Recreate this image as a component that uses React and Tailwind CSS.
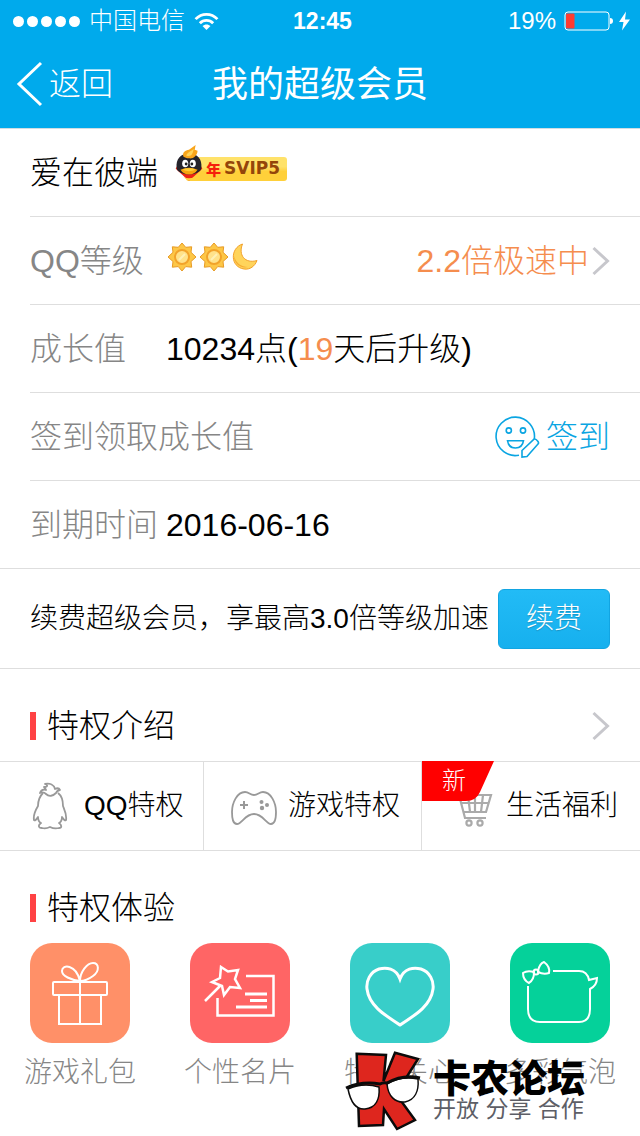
import classNames from 'clsx'

const SignalDots = () => (
  <div className="flex gap-[3px]">
    {[1, 2, 3, 4, 5].map((i) => (
      <span key={i} className="h-[11px] w-[11px] rounded-full bg-white" />
    ))}
  </div>
)

const Wifi = () => (
  <svg width="25" height="19" viewBox="0 0 26 20" fill="none" stroke="#fff" strokeWidth="3">
    <path d="M1.5 7.5C8 .8 18 .8 24.500 7.500" />
    <path d="M6 11.800c4-4 10-4 14 0" />
    <path d="M13 19l-4.200-4.300c2.400-2.200 6-2.200 8.400 0z" fill="#fff" stroke="none" />
  </svg>
)

const Battery = () => (
  <svg width="68" height="20" viewBox="0 0 68 20">
    <rect x="1" y="1" width="44" height="18" rx="3" fill="none" stroke="#fff" />
    <rect x="2" y="2.500" width="8.500" height="15" rx="1" fill="#ff3b30" />
    <path d="M46 7q3 0 3 3t-3 3z" fill="#fff" />
    <path d="M62 .5l-7 10.500h4.500l-1.500 8.500 8-11h-5z" fill="#fff" />
  </svg>
)

const Chevron = () => (
  <svg width="18" height="30" viewBox="0 0 18 30" fill="none" stroke="#c7c7cc" strokeWidth="3">
    <path d="M1.500 2l14 13-14 13" />
  </svg>
)

const SvipBadge = () => (
  <span className="relative mb-4 ml-2 flex h-10 w-[113px] items-end pb-1">
    <span className="ml-3 flex h-6 flex-1 items-center rounded-[3px] bg-linear-to-b from-[#ffe26a] from-40% to-[#ffd03a] to-60% pl-5">
      <span className="font-['Noto_Sans_CJK_SC',sans-serif] text-[15px] leading-none font-black text-[#f5200c]">年</span>
      <span className="pl-[3px] font-['DejaVu_Sans',sans-serif] text-[17px] leading-none font-bold text-[#94450a]">SVIP5</span>
    </span>
    <svg className="absolute top-0 left-0" width="30" height="38" viewBox="0 0 30 40">
      <path d="M1 25l14 13 14-13-3-6H4z" fill="#ee2314" />
      <path d="M2 24C1 15 6 9 15 9s14 6 13 15c0 4-6 7-13 7S2 28 2 24z" fill="#25232b" />
      <path d="M9 12c-1-5 2-6 6-7l7-5-1 5 3 1c0 5-5 9-9 8-3 0-4-1-6-2z" fill="#f9a51b" />
      <path d="M12 11c2-4 5-4 8-7-1 6-3 9-8 7z" fill="#ffd45a" />
      <ellipse cx="11" cy="19.500" rx="3.200" ry="4" fill="#fff" />
      <ellipse cx="19" cy="19.500" rx="3.200" ry="4" fill="#fff" />
      <circle cx="12" cy="20" r="1.500" fill="#222" />
      <circle cx="18" cy="20" r="1.500" fill="#222" />
      <path d="M6 26q9-4 18 0-3 5-9 5T6 26z" fill="#f7a30c" />
      <path d="M8 26q7-3 14 0-7 3-14 0z" fill="#ffcb35" />
      <path d="M9 34l6 4 6-4q-6 2-12 0z" fill="#ffd23e" />
    </svg>
  </span>
)

const Sun = () => (
  <svg width="32" height="30" viewBox="0 0 32 30">
    <path
      d="M16 1l3.700 4.300 6-.5-.7 5.500L30 15l-5 4.500.7 5.700-6-.6L16 29l-3.700-4.400-6 .6.700-5.700L2 15l5-4.700-.7-5.500 6 .5z"
      fill="#fdc747"
      stroke="#e89b26"
    />
    <circle cx="16" cy="15" r="7" fill="#ffe28a" stroke="#f2a32b" strokeWidth="2" />
    <path d="M13 18l6-6" stroke="#fff0b5" strokeWidth="2" />
  </svg>
)

const Moon = () => (
  <svg width="32" height="30" viewBox="0 0 32 30">
    <path d="M12.500 2C0 6 0 25 14 27c6 1 11-3 13-8.500C15 22 8 13 12.500 2z" fill="#ffd45b" stroke="#f2a12a" />
    <path d="M4 14c0 8 7 13 14 11-7 0-12-4-14-11z" fill="#f6ab32" />
  </svg>
)

const SignIcon = () => (
  <svg width="46" height="44" viewBox="0 0 46 44" fill="none" stroke="#0aa5e2" strokeWidth="1.600">
    <path d="M25 40.200A19.200 19.200 0 1 1 40.300 24" />
    <circle cx="14.800" cy="15.500" r="2.600" />
    <circle cx="29" cy="15.500" r="2.600" />
    <path d="M13.500 25.700h16q-1 7.300-8 7.300t-8-7.300z" />
    <path d="M28 42v-6.500l12-11.300q1.500-1 4 2.300 1 1.500 0 2.500L33 41.500z" />
  </svg>
)

const Penguin = () => (
  <svg width="48" height="48" viewBox="0 0 48 48" fill="none" stroke="#999" strokeWidth="1.800" strokeLinejoin="round">
    <path d="M17 11c-4 4-5 8-5 13-3 5-5 9-4 14 1 1 2 0 4-3 0 3 1 5 3 6-3 2-3 5 1 5 4 1 6 0 8-1 2 1 5 2 9 1 3 0 3-3 0-5 2-1 3-3 3-6 2 3 3 4 4 3 1-5-1-9-3-14 0-5-1-10-5-13" />
    <path d="M20 12c-2-2-4-2-6-1 1-3 3-4 6-3-1-2-2-3-2-3 4 0 4-2 1-3 5-1 9 1 10 5 2-1 4-1 5 1-2 0-3 1-4 3-3 3-7 4-10 1z" />
  </svg>
)

const Gamepad = () => (
  <svg width="48" height="48" viewBox="0 0 48 48" fill="none" stroke="#999" strokeWidth="1.800">
    <path d="M15 10c4 0 5 3 9 3s5-3 9-3c8 0 13 11 13 20 0 7-1 12-5 12-5 0-8-10-17-10S12 42 7 42c-4 0-5-5-5-12 0-9 5-20 13-20z" />
    <path d="M14 19v8M10 23h8" strokeWidth="2" />
    <g fill="#999" stroke="none">
      <circle cx="31.500" cy="20" r="2" />
      <circle cx="37" cy="23" r="2" />
      <circle cx="32" cy="26" r="2.200" />
    </g>
  </svg>
)

const Cart = () => (
  <svg width="48" height="48" viewBox="0 0 48 48" fill="none" stroke="#aaa" strokeWidth="2.200">
    <path d="M8 13h35l-5 17H16M11 13l6 23h21M14 21h27M20 13l2 17M27 13v17M35 13l-2 17" />
    <circle cx="21" cy="41" r="2.600" />
    <circle cx="32" cy="41" r="2.600" />
  </svg>
)

const Gift = () => (
  <>
    <rect x="23" y="39" width="54" height="13" rx="1" />
    <path d="M29 53v28h42V53M50 39v42" />
    <path d="M50 38c-9-1-18-5-18-10 0-7 14-7 18 10zM50 38c0-9 7-18 13-18s7 8 0 13c-4 3-8 5-13 5z" />
  </>
)

const Card = () => (
  <>
    <path d="M31 24l7 4.500 10-1.500-3 9 5 9-10-1-6 8-2-9-10-4 8-4zM30 43L15 58" strokeWidth="2.500" />
    <path d="M56 33h27.500v39.500h-56V55" strokeWidth="2.500" />
    <path d="M55 51h22M60 57.500h17M46 64h31" strokeWidth="3" />
  </>
)

const Heart = () => (
  <path d="M50 36C46 25 36 24 29 26c-9 3-13 12-12 20 2 16 16 25 33 36 17-11 31-20 33-36 1-8-3-17-12-20-7-2-17-1-21 10z" />
)

const Bubble = () => (
  <>
    <path d="M43 28h26c6 0 9 4 10 9l8-2c0 5-3 9-7 11v20c0 8-3 13-11 13H30c-8 0-12-5-12-13V43" />
    <circle cx="26" cy="29" r="2.500" />
    <path d="M28 28c1-5 3-8 6-9 4 3 6 7 5 11-3 1-7 1-11-1zM24 29c-4-1-8-1-11 1 0 5 2 8 6 10 3-2 5-5 5-10z" />
  </>
)

const Row = ({ label, labelClass, children }) => (
  <li className="flex h-[88px] items-center gap-2 border-b border-[#dedede] pr-[30px] last:h-[87px] last:border-b-0">
    <span className={classNames('min-w-32 whitespace-nowrap', labelClass || 'text-[#868686]')}>{label}</span>
    {children}
  </li>
)

const SectionTitle = ({ children }) => (
  <h2 className="flex items-center gap-[11px] text-[32px] leading-[44px] font-light">
    <span className="h-7 w-[6px] bg-[#ff4244]" />
    {children}
  </h2>
)

const privileges = [
  { name: 'QQ特权', Icon: Penguin },
  { name: '游戏特权', Icon: Gamepad },
  { name: '生活福利', Icon: Cart, isNew: true },
]

const trials = [
  { name: '游戏礼包', Icon: Gift, color: 'bg-[#ff9068]', stroke: 2 },
  { name: '个性名片', Icon: Card, color: 'bg-[#ff6565]', stroke: 3 },
  { name: '特别关心', Icon: Heart, color: 'bg-[#38cec9]', stroke: 3 },
  { name: '多彩气泡', Icon: Bubble, color: 'bg-[#05d19a]', stroke: 2 },
]

const ForumMark = () => (
  <div className="absolute top-[200px] left-[345px] flex gap-2">
    <svg width="80" height="80" viewBox="0 0 80 80">
      <g fill="#de261e" stroke="#0b0b0b" strokeWidth="2.500">
        <path d="M11.700 2.700L41 4l-2.500 26L50 1.700 73 8 51 43l19 26-18 9-13-20-1 16-24 1z" />
      </g>
      <g fill="#fff" stroke="#0b0b0b" strokeWidth="1.500">
        <path d="M3 38c9-4 21-5 31-2 1 12-3 21-14 22C9 59 5 48 3 38z" />
        <path d="M42 33c8-5 20-7 31-5 1 12-3 21-13 23-10 1-17-6-18-18z" />
      </g>
      <path d="M1 37c9-4 22-6 34-4q3-2 7-1c9-5 21-8 33-5" fill="none" stroke="#0b0b0b" strokeWidth="3" />
    </svg>
    <div className="whitespace-nowrap">
      <p className="mt-2 text-[38px] leading-[40px] font-black text-black">卡农论坛</p>
      <p className="text-[23px] leading-[20px] font-normal text-[#5d5e66]">开放 分享 合作</p>
    </div>
  </div>
)

const App = () => {
  return (
    <div className="min-h-screen overflow-x-hidden bg-white font-['Liberation_Sans','Noto_Sans_CJK_SC',sans-serif] text-[32px] leading-[44px] font-light text-black">
      <header className="border-b border-[#cfdde3] bg-[#00aaec] text-white">
        <div className="grid h-10 grid-cols-[1fr_auto_1fr] items-center pt-[2px] pr-2 pl-[13px] text-[24px] leading-[38px]">
          <div className="flex items-center gap-[9px]">
            <SignalDots />
            <span>中国电信</span>
            <Wifi />
          </div>
          <span className="text-[23px] font-bold">12:45</span>
          <div className="flex items-center justify-end gap-2">
            <span>19%</span>
            <Battery />
          </div>
        </div>
        <div className="grid h-[88px] grid-cols-[1fr_auto_1fr] items-center px-4">
          <a href="#back" className="flex items-center gap-[6px]">
            <svg width="27" height="46" viewBox="0 0 27 46" fill="none" stroke="#fff" strokeWidth="3">
              <path d="M25 2L3 23l22 21" />
            </svg>
            返回
          </a>
          <h1 className="pt-[2px] text-[36px] font-normal">我的超级会员</h1>
        </div>
      </header>

      <ul className="border-b border-[#dedede] pl-[30px]">
        <Row label="爱在彼端" labelClass="text-black">
          <SvipBadge />
        </Row>
        <Row label="QQ等级">
          <span className="mb-2 flex">
            <Sun />
            <Sun />
            <Moon />
          </span>
          <a href="#speed" className="ml-auto flex items-center gap-[3px] text-[#f58d4e]">
            2.2倍极速中
            <Chevron />
          </a>
        </Row>
        <Row label="成长值">
          <span>
            10234点(<span className="text-[#f58d4e]">19</span>天后升级)
          </span>
        </Row>
        <Row label="签到领取成长值">
          <button type="button" className="ml-auto flex items-center gap-[6px] text-[#0aa5e2]">
            <SignIcon />
            签到
          </button>
        </Row>
        <Row label="到期时间">
          <span>2016-06-16</span>
        </Row>
      </ul>

      <section className="flex h-[100px] items-center justify-between border-b border-[#dedede] px-[30px] text-[28px]">
        <p className="whitespace-nowrap">续费超级会员，享最高3.0倍等级加速</p>
        <button
          type="button"
          className="h-[60px] w-28 shrink-0 rounded-md border border-[#12a5e2] bg-linear-to-b from-[#22bbf6] to-[#16b0ee] text-white text-shadow-xs"
        >
          续费
        </button>
      </section>

      <section>
        <div className="flex h-[92px] items-center justify-between px-[30px] pt-[22px]">
          <SectionTitle>特权介绍</SectionTitle>
          <a href="#privileges" aria-label="特权介绍">
            <Chevron />
          </a>
        </div>
        <nav className="grid h-[90px] grid-cols-[204fr_218fr_218fr] border-y border-[#dedede] text-[28px]">
          {privileges.map(({ name, Icon, isNew }) => (
            <a
              key={name}
              href="#privilege"
              className="relative flex items-center gap-[10px] border-r border-[#dedede] pl-[26px] last:border-r-0"
            >
              <Icon />
              <span className="whitespace-nowrap">{name}</span>
              {isNew && (
                <span className="absolute -top-px left-0 h-10 w-[72px]">
                  <svg className="absolute inset-0" width="72" height="40" viewBox="0 0 72 40">
                    <path d="M0 0h72L58 31q-4 9-14 9H0z" fill="#f00" />
                  </svg>
                  <span className="relative block pr-2 text-center text-[24px] leading-10 text-white">新</span>
                </span>
              )}
            </a>
          ))}
        </nav>
      </section>

      <section className="relative pt-[35px] pb-[42px]">
        <div className="px-[30px]">
          <SectionTitle>特权体验</SectionTitle>
        </div>
        <ul className="mt-[13px] grid grid-cols-4">
          {trials.map(({ name, Icon, color, stroke }) => (
            <li key={name}>
              <a href="#trial" className="flex flex-col items-center gap-2 text-[28px] text-[#868686]">
                <span className={classNames('rounded-[22px]', color)}>
                  <svg width="100" height="100" viewBox="0 0 100 100" fill="none" stroke="#fff" strokeWidth={stroke}>
                    <Icon />
                  </svg>
                </span>
                <span className="whitespace-nowrap">{name}</span>
              </a>
            </li>
          ))}
        </ul>
        <ForumMark />
      </section>
    </div>
  )
}

export default App
